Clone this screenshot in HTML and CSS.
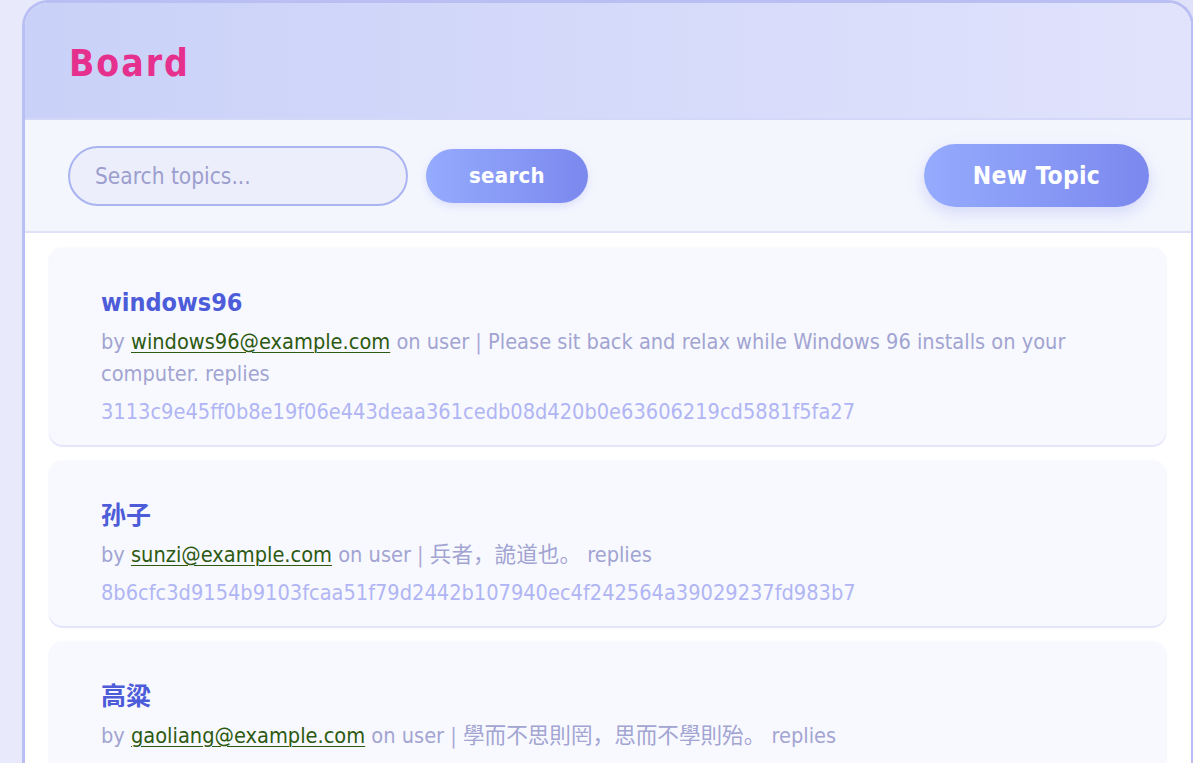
FILE: index.html
```html
<!DOCTYPE html>
<html lang="en">
<head>
<meta charset="utf-8">
<title>Board</title>
<link rel="stylesheet" href="styles.css">
</head>
<body>
<div class="board">
  <header class="board-header">
    <h1 class="board-title">Board</h1>
  </header>
  <div class="toolbar">
    <form class="search-form">
      <input class="search-input" type="text" placeholder="Search topics...">
      <button class="btn btn-search" type="button">search</button>
    </form>
    <button class="btn btn-new" type="button">New Topic</button>
  </div>
  <div class="topic-list">
    <article class="topic">
      <h2 class="topic-title">windows96</h2>
      <p class="topic-meta">by <a class="author" href="#">windows96@example.com</a> on user <span class="sep">|</span> Please sit back and relax while Windows 96 installs on your computer. replies</p>
      <p class="topic-hash">3113c9e45ff0b8e19f06e443deaa361cedb08d420b0e63606219cd5881f5fa27</p>
    </article>
    <article class="topic">
      <h2 class="topic-title">孙子</h2>
      <p class="topic-meta">by <a class="author" href="#">sunzi@example.com</a> on user <span class="sep">|</span> 兵者，詭道也。 replies</p>
      <p class="topic-hash">8b6cfc3d9154b9103fcaa51f79d2442b107940ec4f242564a39029237fd983b7</p>
    </article>
    <article class="topic">
      <h2 class="topic-title">高粱</h2>
      <p class="topic-meta">by <a class="author" href="#">gaoliang@example.com</a> on user <span class="sep">|</span> 學而不思則罔，思而不學則殆。 replies</p>
      <p class="topic-hash">5e2a71c0d3b94f8a6c1e07b52d9f4a3866e0c1b7d4f2a9e5038b6c71f2d4e9a0</p>
    </article>
  </div>
</div>
</body>
</html>
```

FILE: styles.css
```css
* { box-sizing: border-box; }

html, body {
  margin: 0;
  height: 100%;
  overflow: hidden;
}

body {
  background: linear-gradient(90deg, #e8eafb 0%, #dfe2f9 100%);
  font-family: "DejaVu Sans Condensed", "DejaVu Sans", "Noto Sans CJK SC", "Noto Sans CJK TC", sans-serif;
  font-stretch: condensed;
  color: #a2a4d2;
}

.board {
  margin-left: 22px;
  width: 1172px;
  min-height: 800px;
  background: #ffffff;
  border: 3px solid #b9bff3;
  border-bottom: none;
  border-radius: 26px 26px 0 0;
  overflow: hidden;
}

.board-header {
  height: 117px;
  padding: 6px 0 0 44px;
  display: flex;
  align-items: center;
  background: linear-gradient(90deg, #c9d1f8 0%, #e1e3fc 100%);
  border-bottom: 2px solid #d4d8f8;
}

.board-title {
  margin: 0;
  font-size: 37px;
  font-weight: bold;
  letter-spacing: 2px;
  color: #e6308e;
}

.toolbar {
  height: 113px;
  display: flex;
  align-items: center;
  justify-content: space-between;
  padding: 0 42px 0 43px;
  background: #f4f6fe;
  border-bottom: 2px solid #dfe1f8;
}

.search-form {
  display: flex;
  align-items: center;
  gap: 18px;
}

.search-input {
  width: 340px;
  height: 60px;
  padding: 0 25px;
  border: 2px solid #aab4f0;
  border-radius: 30px;
  background: #eceefb;
  font-family: inherit;
  font-stretch: condensed;
  font-size: 22.5px;
  color: #6a6cab;
  outline: none;
}

.search-input::placeholder {
  color: #9c9ece;
}

.btn {
  border: none;
  color: #ffffff;
  font-family: inherit;
  font-stretch: condensed;
  font-weight: bold;
  letter-spacing: 0.3px;
  background: linear-gradient(90deg, #95abfd 0%, #7b88ee 100%);
  cursor: pointer;
}

.btn-search {
  width: 162px;
  height: 54px;
  border-radius: 27px;
  font-size: 22px;
  box-shadow: 0 3px 8px rgba(120, 130, 230, 0.2);
}

.btn-new {
  width: 225px;
  height: 63px;
  border-radius: 32px;
  font-size: 24.5px;
  box-shadow: 0 6px 16px rgba(120, 130, 230, 0.25);
}

.topic-list {
  padding: 15px 25px 0 24px;
  display: flex;
  flex-direction: column;
  gap: 16px;
}

.topic {
  background: #f8f9fe;
  border-radius: 14px;
  padding: 40px 52px 17px;
  box-shadow: 0 2px 1px #e3e5f9, 0 0 2px rgba(200, 205, 245, 0.3);
}

.topic-title {
  margin: 0 0 8px;
  font-size: 25px;
  line-height: 30px;
  font-weight: bold;
  color: #4d5cd9;
}

.topic-meta {
  margin: 0;
  font-size: 21.6px;
  line-height: 32px;
  color: #a2a4d2;
}

.author {
  color: #2d5a12;
  text-decoration: underline;
  text-underline-offset: 3px;
  text-decoration-thickness: 1px;
}

.sep {
  color: #ada8d8;
}

.topic-hash {
  margin: 6px 0 0;
  font-size: 21.6px;
  line-height: 32px;
  color: #b0b5f4;
}
```
